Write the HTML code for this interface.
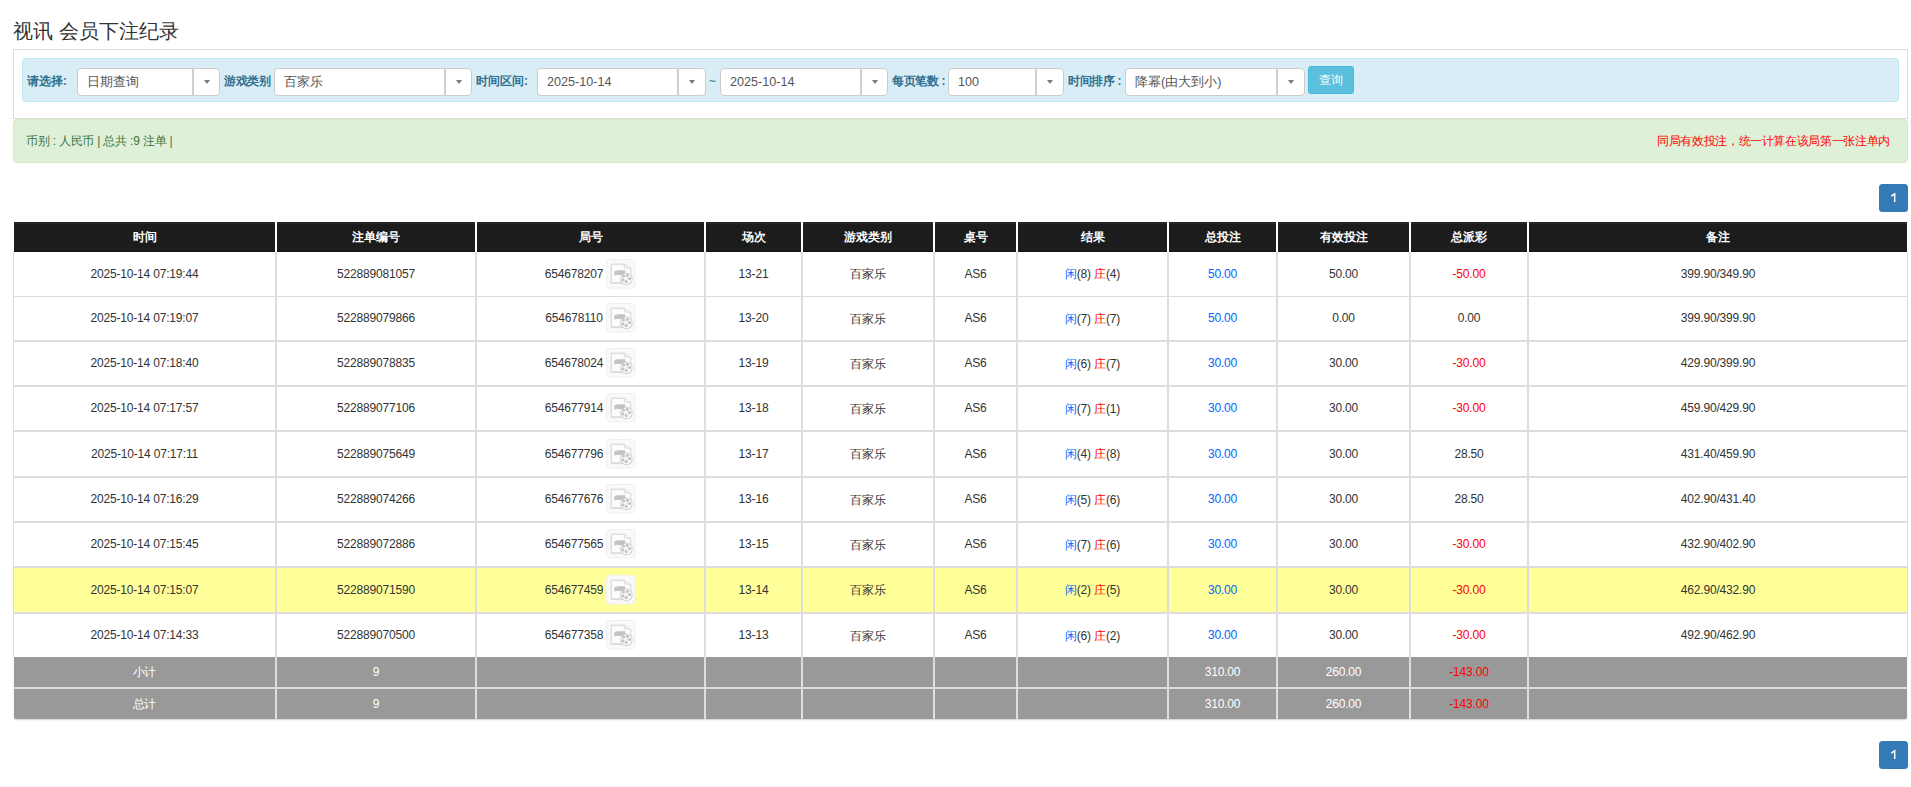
<!DOCTYPE html>
<html><head><meta charset="utf-8"><title>视讯 会员下注纪录</title>
<style>
*{box-sizing:border-box;margin:0;padding:0}
html,body{width:1911px;height:787px;overflow:hidden;background:#fff}
body{font-family:"Liberation Sans",sans-serif;font-size:12px;color:#333;position:relative}
.abs{position:absolute}
h3.title{position:absolute;left:13px;top:17px;font-size:20px;font-weight:normal;color:#333;line-height:28px;white-space:nowrap}
.panel{position:absolute;left:13px;top:49px;width:1895px;height:70px;border:1px solid #ddd;background:#fff}
.ainfo{position:absolute;left:22px;top:58px;width:1877px;height:44px;background:#d9edf7;border:1px solid #bce8f1;border-radius:4px}
.lbl{position:absolute;top:74px;font-weight:bold;color:#31708f;font-size:12px;line-height:14px;white-space:nowrap}
.sel{position:absolute;background:#fff;border:1px solid #ccc;border-radius:4px}
.st{position:absolute;left:9px;top:5px;font-size:12.6px;line-height:16px;color:#555;white-space:nowrap}
.sdiv{position:absolute;top:0;bottom:0;width:2px;background:#d0d0d0}
.sc{position:absolute;top:0;bottom:0;display:flex;align-items:center;justify-content:center}
.caret{display:block;width:0;height:0;border-top:4px solid #7a7a7a;border-left:3px solid transparent;border-right:3px solid transparent}
.btn{position:absolute;left:1308px;top:66px;width:46px;height:28px;background:#5bc0de;border:1px solid #46b8da;border-radius:3px;color:#fff;font-size:12px;line-height:26px;text-align:center}
.asucc{position:absolute;left:13px;top:119px;width:1895px;height:44px;background:#dff0d8;border:1px solid #d6e9c6;border-radius:4px;color:#3c763d}
.pg{position:absolute;width:29px;height:28px;background:#337ab7;border-radius:3.5px;color:#fff;font-weight:normal;font-size:12px;line-height:28px;text-align:center}
.hd{position:absolute;top:222px;height:30px;background:#1c1c1c;box-shadow:inset 0 1px 0 #212121,inset 0 2px 0 #292929,inset 0 -1px 0 #131313;color:#fff;font-weight:bold;font-size:12px;display:flex;align-items:center;justify-content:center}
.c{position:absolute;font-size:12px;letter-spacing:-0.18px;padding-bottom:1px;display:flex;align-items:center;justify-content:center;white-space:nowrap}
.vl{position:absolute;width:2px;background:#ddd}
.hl{position:absolute;background:#ddd}
.ft{position:absolute;background:#999;color:#fff;font-size:12px;letter-spacing:-0.18px;display:flex;align-items:center;justify-content:center}
.blue{color:#0066ff}.red{color:#ff0000}
.film{display:inline-block;width:30px;height:30px;margin-left:3px;vertical-align:middle}
.film svg{display:block}
</style></head><body>

<h3 class="title">视讯 会员下注纪录</h3>
<div class="panel"></div><div class="ainfo"></div>
<span class="lbl" style="left:27px">请选择:</span>
<div class="sel" style="left:77px;top:68px;width:143px;height:28px"><span class="st">日期查询</span><div class="sdiv" style="left:114px"></div><div class="sc" style="left:116px;right:0"><i class="caret"></i></div></div>
<span class="lbl" style="left:224px;letter-spacing:-0.4px">游戏类别</span>
<div class="sel" style="left:274px;top:68px;width:198px;height:28px"><span class="st">百家乐</span><div class="sdiv" style="left:169px"></div><div class="sc" style="left:171px;right:0"><i class="caret"></i></div></div>
<span class="lbl" style="left:476px">时间区间:</span>
<div class="sel" style="left:537px;top:68px;width:169px;height:28px"><span class="st">2025-10-14</span><div class="sdiv" style="left:139px"></div><div class="sc" style="left:141px;right:0"><i class="caret"></i></div></div>
<span class="abs" style="left:709px;top:74px;color:#31708f;font-size:12px;line-height:14px">~</span>
<div class="sel" style="left:720px;top:68px;width:168px;height:28px"><span class="st">2025-10-14</span><div class="sdiv" style="left:139px"></div><div class="sc" style="left:141px;right:0"><i class="caret"></i></div></div>
<span class="lbl" style="left:892px;letter-spacing:-0.35px">每页笔数 :</span>
<div class="sel" style="left:948px;top:68px;width:116px;height:28px"><span class="st">100</span><div class="sdiv" style="left:86px"></div><div class="sc" style="left:88px;right:0"><i class="caret"></i></div></div>
<span class="lbl" style="left:1068px;letter-spacing:-0.35px">时间排序 :</span>
<div class="sel" style="left:1125px;top:68px;width:180px;height:28px"><span class="st">降幂(由大到小)</span><div class="sdiv" style="left:150px"></div><div class="sc" style="left:152px;right:0"><i class="caret"></i></div></div>
<div class="btn">查询</div>
<div class="asucc"><span class="abs" style="left:12px;top:14px;line-height:14px;letter-spacing:-0.22px">币别 : 人民币 | 总共 :9 注单 |</span><span class="abs red" style="right:17px;top:14px;line-height:14px;letter-spacing:-0.35px">同局有效投注，统一计算在该局第一张注单内</span></div>
<div class="pg" style="left:1879px;top:184px"><svg width="29" height="28" style="display:block"><path d="M12.3 12L15.7 9.9V18" fill="none" stroke="#fff" stroke-width="1.5"/></svg></div>
<div class="hd" style="left:14px;width:261px">时间</div>
<div class="hd" style="left:277px;width:198px">注单编号</div>
<div class="hd" style="left:477px;width:227px">局号</div>
<div class="hd" style="left:706px;width:95px">场次</div>
<div class="hd" style="left:803px;width:130px">游戏类别</div>
<div class="hd" style="left:935px;width:81px">桌号</div>
<div class="hd" style="left:1018px;width:149px">结果</div>
<div class="hd" style="left:1169px;width:107px">总投注</div>
<div class="hd" style="left:1278px;width:131px">有效投注</div>
<div class="hd" style="left:1411px;width:116px">总派彩</div>
<div class="hd" style="left:1529px;width:378px">备注</div>
<div class="abs" style="left:13px;top:252px;width:1895px;height:44px;background:#fff"></div>
<div class="c" style="left:14px;top:252px;width:261px;height:44px"><span>2025-10-14 07:19:44</span></div>
<div class="c" style="left:277px;top:252px;width:198px;height:44px"><span>522889081057</span></div>
<div class="c" style="left:477px;top:252px;width:227px;height:44px"><span><span style="position:relative;top:1px">654678207</span><span class="film"><svg width="30" height="30" viewBox="0 0 30 30"><rect x="0.5" y="0.5" width="28.5" height="28.5" rx="3.5" fill="#f9f9f9" stroke="#efefef"/><path d="M5.2 5.2H18.3l6.5 4.3V24.3H5.2z" fill="#fcfcfc" stroke="#cdcdcd" stroke-width="0.9"/><path d="M5.6 23.6H24.4" stroke="#e0e0e0" stroke-width="1.3"/><path d="M18.3 5.2V8.7L24.8 9.5" fill="#f4f4f4" stroke="#d2d2d2" stroke-width="0.8"/><path d="M8.4 11.8L10.5 12.6V11.2H19.2V16.1H10.5V15.2L8.4 17z" fill="#c2c2c2"/><circle cx="20.4" cy="20" r="5.8" fill="#fbfbfb" stroke="#c9c9c9" stroke-width="0.9"/><circle cx="17.65" cy="17" r="1.6" fill="#c4c4c4"/><circle cx="21.3" cy="16.4" r="1.6" fill="#c4c4c4"/><circle cx="23.5" cy="19.6" r="1.6" fill="#c4c4c4"/><circle cx="20.25" cy="22.6" r="1.6" fill="#c4c4c4"/><circle cx="17" cy="20.9" r="1.6" fill="#c4c4c4"/><path d="M19.8 19.9h1.2" stroke="#cfcfcf" stroke-width="0.6"/></svg></span></span></div>
<div class="c" style="left:706px;top:252px;width:95px;height:44px"><span>13-21</span></div>
<div class="c" style="left:803px;top:252px;width:130px;height:44px"><span><span style="position:relative;top:1px">百家乐</span></span></div>
<div class="c" style="left:935px;top:252px;width:81px;height:44px"><span>AS6</span></div>
<div class="c" style="left:1018px;top:252px;width:149px;height:44px"><span><span style="position:relative;top:1px"><span class="blue">闲</span>(8) <span class="red">庄</span>(4)</span></span></div>
<div class="c" style="left:1169px;top:252px;width:107px;height:44px"><span><span class="blue">50.00</span></span></div>
<div class="c" style="left:1278px;top:252px;width:131px;height:44px"><span>50.00</span></div>
<div class="c" style="left:1411px;top:252px;width:116px;height:44px"><span><span class="red">-50.00</span></span></div>
<div class="c" style="left:1529px;top:252px;width:378px;height:44px"><span>399.90/349.90</span></div>
<div class="abs" style="left:13px;top:297px;width:1895px;height:43px;background:#fff"></div>
<div class="c" style="left:14px;top:297px;width:261px;height:43px"><span>2025-10-14 07:19:07</span></div>
<div class="c" style="left:277px;top:297px;width:198px;height:43px"><span>522889079866</span></div>
<div class="c" style="left:477px;top:297px;width:227px;height:43px"><span><span style="position:relative;top:1px">654678110</span><span class="film"><svg width="30" height="30" viewBox="0 0 30 30"><rect x="0.5" y="0.5" width="28.5" height="28.5" rx="3.5" fill="#f9f9f9" stroke="#efefef"/><path d="M5.2 5.2H18.3l6.5 4.3V24.3H5.2z" fill="#fcfcfc" stroke="#cdcdcd" stroke-width="0.9"/><path d="M5.6 23.6H24.4" stroke="#e0e0e0" stroke-width="1.3"/><path d="M18.3 5.2V8.7L24.8 9.5" fill="#f4f4f4" stroke="#d2d2d2" stroke-width="0.8"/><path d="M8.4 11.8L10.5 12.6V11.2H19.2V16.1H10.5V15.2L8.4 17z" fill="#c2c2c2"/><circle cx="20.4" cy="20" r="5.8" fill="#fbfbfb" stroke="#c9c9c9" stroke-width="0.9"/><circle cx="17.65" cy="17" r="1.6" fill="#c4c4c4"/><circle cx="21.3" cy="16.4" r="1.6" fill="#c4c4c4"/><circle cx="23.5" cy="19.6" r="1.6" fill="#c4c4c4"/><circle cx="20.25" cy="22.6" r="1.6" fill="#c4c4c4"/><circle cx="17" cy="20.9" r="1.6" fill="#c4c4c4"/><path d="M19.8 19.9h1.2" stroke="#cfcfcf" stroke-width="0.6"/></svg></span></span></div>
<div class="c" style="left:706px;top:297px;width:95px;height:43px"><span>13-20</span></div>
<div class="c" style="left:803px;top:297px;width:130px;height:43px"><span><span style="position:relative;top:1px">百家乐</span></span></div>
<div class="c" style="left:935px;top:297px;width:81px;height:43px"><span>AS6</span></div>
<div class="c" style="left:1018px;top:297px;width:149px;height:43px"><span><span style="position:relative;top:1px"><span class="blue">闲</span>(7) <span class="red">庄</span>(7)</span></span></div>
<div class="c" style="left:1169px;top:297px;width:107px;height:43px"><span><span class="blue">50.00</span></span></div>
<div class="c" style="left:1278px;top:297px;width:131px;height:43px"><span>0.00</span></div>
<div class="c" style="left:1411px;top:297px;width:116px;height:43px"><span>0.00</span></div>
<div class="c" style="left:1529px;top:297px;width:378px;height:43px"><span>399.90/399.90</span></div>
<div class="abs" style="left:13px;top:342px;width:1895px;height:43px;background:#fff"></div>
<div class="c" style="left:14px;top:342px;width:261px;height:43px"><span>2025-10-14 07:18:40</span></div>
<div class="c" style="left:277px;top:342px;width:198px;height:43px"><span>522889078835</span></div>
<div class="c" style="left:477px;top:342px;width:227px;height:43px"><span><span style="position:relative;top:1px">654678024</span><span class="film"><svg width="30" height="30" viewBox="0 0 30 30"><rect x="0.5" y="0.5" width="28.5" height="28.5" rx="3.5" fill="#f9f9f9" stroke="#efefef"/><path d="M5.2 5.2H18.3l6.5 4.3V24.3H5.2z" fill="#fcfcfc" stroke="#cdcdcd" stroke-width="0.9"/><path d="M5.6 23.6H24.4" stroke="#e0e0e0" stroke-width="1.3"/><path d="M18.3 5.2V8.7L24.8 9.5" fill="#f4f4f4" stroke="#d2d2d2" stroke-width="0.8"/><path d="M8.4 11.8L10.5 12.6V11.2H19.2V16.1H10.5V15.2L8.4 17z" fill="#c2c2c2"/><circle cx="20.4" cy="20" r="5.8" fill="#fbfbfb" stroke="#c9c9c9" stroke-width="0.9"/><circle cx="17.65" cy="17" r="1.6" fill="#c4c4c4"/><circle cx="21.3" cy="16.4" r="1.6" fill="#c4c4c4"/><circle cx="23.5" cy="19.6" r="1.6" fill="#c4c4c4"/><circle cx="20.25" cy="22.6" r="1.6" fill="#c4c4c4"/><circle cx="17" cy="20.9" r="1.6" fill="#c4c4c4"/><path d="M19.8 19.9h1.2" stroke="#cfcfcf" stroke-width="0.6"/></svg></span></span></div>
<div class="c" style="left:706px;top:342px;width:95px;height:43px"><span>13-19</span></div>
<div class="c" style="left:803px;top:342px;width:130px;height:43px"><span><span style="position:relative;top:1px">百家乐</span></span></div>
<div class="c" style="left:935px;top:342px;width:81px;height:43px"><span>AS6</span></div>
<div class="c" style="left:1018px;top:342px;width:149px;height:43px"><span><span style="position:relative;top:1px"><span class="blue">闲</span>(6) <span class="red">庄</span>(7)</span></span></div>
<div class="c" style="left:1169px;top:342px;width:107px;height:43px"><span><span class="blue">30.00</span></span></div>
<div class="c" style="left:1278px;top:342px;width:131px;height:43px"><span>30.00</span></div>
<div class="c" style="left:1411px;top:342px;width:116px;height:43px"><span><span class="red">-30.00</span></span></div>
<div class="c" style="left:1529px;top:342px;width:378px;height:43px"><span>429.90/399.90</span></div>
<div class="abs" style="left:13px;top:387px;width:1895px;height:43px;background:#fff"></div>
<div class="c" style="left:14px;top:387px;width:261px;height:43px"><span>2025-10-14 07:17:57</span></div>
<div class="c" style="left:277px;top:387px;width:198px;height:43px"><span>522889077106</span></div>
<div class="c" style="left:477px;top:387px;width:227px;height:43px"><span><span style="position:relative;top:1px">654677914</span><span class="film"><svg width="30" height="30" viewBox="0 0 30 30"><rect x="0.5" y="0.5" width="28.5" height="28.5" rx="3.5" fill="#f9f9f9" stroke="#efefef"/><path d="M5.2 5.2H18.3l6.5 4.3V24.3H5.2z" fill="#fcfcfc" stroke="#cdcdcd" stroke-width="0.9"/><path d="M5.6 23.6H24.4" stroke="#e0e0e0" stroke-width="1.3"/><path d="M18.3 5.2V8.7L24.8 9.5" fill="#f4f4f4" stroke="#d2d2d2" stroke-width="0.8"/><path d="M8.4 11.8L10.5 12.6V11.2H19.2V16.1H10.5V15.2L8.4 17z" fill="#c2c2c2"/><circle cx="20.4" cy="20" r="5.8" fill="#fbfbfb" stroke="#c9c9c9" stroke-width="0.9"/><circle cx="17.65" cy="17" r="1.6" fill="#c4c4c4"/><circle cx="21.3" cy="16.4" r="1.6" fill="#c4c4c4"/><circle cx="23.5" cy="19.6" r="1.6" fill="#c4c4c4"/><circle cx="20.25" cy="22.6" r="1.6" fill="#c4c4c4"/><circle cx="17" cy="20.9" r="1.6" fill="#c4c4c4"/><path d="M19.8 19.9h1.2" stroke="#cfcfcf" stroke-width="0.6"/></svg></span></span></div>
<div class="c" style="left:706px;top:387px;width:95px;height:43px"><span>13-18</span></div>
<div class="c" style="left:803px;top:387px;width:130px;height:43px"><span><span style="position:relative;top:1px">百家乐</span></span></div>
<div class="c" style="left:935px;top:387px;width:81px;height:43px"><span>AS6</span></div>
<div class="c" style="left:1018px;top:387px;width:149px;height:43px"><span><span style="position:relative;top:1px"><span class="blue">闲</span>(7) <span class="red">庄</span>(1)</span></span></div>
<div class="c" style="left:1169px;top:387px;width:107px;height:43px"><span><span class="blue">30.00</span></span></div>
<div class="c" style="left:1278px;top:387px;width:131px;height:43px"><span>30.00</span></div>
<div class="c" style="left:1411px;top:387px;width:116px;height:43px"><span><span class="red">-30.00</span></span></div>
<div class="c" style="left:1529px;top:387px;width:378px;height:43px"><span>459.90/429.90</span></div>
<div class="abs" style="left:13px;top:432px;width:1895px;height:44px;background:#fff"></div>
<div class="c" style="left:14px;top:432px;width:261px;height:44px"><span>2025-10-14 07:17:11</span></div>
<div class="c" style="left:277px;top:432px;width:198px;height:44px"><span>522889075649</span></div>
<div class="c" style="left:477px;top:432px;width:227px;height:44px"><span><span style="position:relative;top:1px">654677796</span><span class="film"><svg width="30" height="30" viewBox="0 0 30 30"><rect x="0.5" y="0.5" width="28.5" height="28.5" rx="3.5" fill="#f9f9f9" stroke="#efefef"/><path d="M5.2 5.2H18.3l6.5 4.3V24.3H5.2z" fill="#fcfcfc" stroke="#cdcdcd" stroke-width="0.9"/><path d="M5.6 23.6H24.4" stroke="#e0e0e0" stroke-width="1.3"/><path d="M18.3 5.2V8.7L24.8 9.5" fill="#f4f4f4" stroke="#d2d2d2" stroke-width="0.8"/><path d="M8.4 11.8L10.5 12.6V11.2H19.2V16.1H10.5V15.2L8.4 17z" fill="#c2c2c2"/><circle cx="20.4" cy="20" r="5.8" fill="#fbfbfb" stroke="#c9c9c9" stroke-width="0.9"/><circle cx="17.65" cy="17" r="1.6" fill="#c4c4c4"/><circle cx="21.3" cy="16.4" r="1.6" fill="#c4c4c4"/><circle cx="23.5" cy="19.6" r="1.6" fill="#c4c4c4"/><circle cx="20.25" cy="22.6" r="1.6" fill="#c4c4c4"/><circle cx="17" cy="20.9" r="1.6" fill="#c4c4c4"/><path d="M19.8 19.9h1.2" stroke="#cfcfcf" stroke-width="0.6"/></svg></span></span></div>
<div class="c" style="left:706px;top:432px;width:95px;height:44px"><span>13-17</span></div>
<div class="c" style="left:803px;top:432px;width:130px;height:44px"><span><span style="position:relative;top:1px">百家乐</span></span></div>
<div class="c" style="left:935px;top:432px;width:81px;height:44px"><span>AS6</span></div>
<div class="c" style="left:1018px;top:432px;width:149px;height:44px"><span><span style="position:relative;top:1px"><span class="blue">闲</span>(4) <span class="red">庄</span>(8)</span></span></div>
<div class="c" style="left:1169px;top:432px;width:107px;height:44px"><span><span class="blue">30.00</span></span></div>
<div class="c" style="left:1278px;top:432px;width:131px;height:44px"><span>30.00</span></div>
<div class="c" style="left:1411px;top:432px;width:116px;height:44px"><span>28.50</span></div>
<div class="c" style="left:1529px;top:432px;width:378px;height:44px"><span>431.40/459.90</span></div>
<div class="abs" style="left:13px;top:478px;width:1895px;height:43px;background:#fff"></div>
<div class="c" style="left:14px;top:478px;width:261px;height:43px"><span>2025-10-14 07:16:29</span></div>
<div class="c" style="left:277px;top:478px;width:198px;height:43px"><span>522889074266</span></div>
<div class="c" style="left:477px;top:478px;width:227px;height:43px"><span><span style="position:relative;top:1px">654677676</span><span class="film"><svg width="30" height="30" viewBox="0 0 30 30"><rect x="0.5" y="0.5" width="28.5" height="28.5" rx="3.5" fill="#f9f9f9" stroke="#efefef"/><path d="M5.2 5.2H18.3l6.5 4.3V24.3H5.2z" fill="#fcfcfc" stroke="#cdcdcd" stroke-width="0.9"/><path d="M5.6 23.6H24.4" stroke="#e0e0e0" stroke-width="1.3"/><path d="M18.3 5.2V8.7L24.8 9.5" fill="#f4f4f4" stroke="#d2d2d2" stroke-width="0.8"/><path d="M8.4 11.8L10.5 12.6V11.2H19.2V16.1H10.5V15.2L8.4 17z" fill="#c2c2c2"/><circle cx="20.4" cy="20" r="5.8" fill="#fbfbfb" stroke="#c9c9c9" stroke-width="0.9"/><circle cx="17.65" cy="17" r="1.6" fill="#c4c4c4"/><circle cx="21.3" cy="16.4" r="1.6" fill="#c4c4c4"/><circle cx="23.5" cy="19.6" r="1.6" fill="#c4c4c4"/><circle cx="20.25" cy="22.6" r="1.6" fill="#c4c4c4"/><circle cx="17" cy="20.9" r="1.6" fill="#c4c4c4"/><path d="M19.8 19.9h1.2" stroke="#cfcfcf" stroke-width="0.6"/></svg></span></span></div>
<div class="c" style="left:706px;top:478px;width:95px;height:43px"><span>13-16</span></div>
<div class="c" style="left:803px;top:478px;width:130px;height:43px"><span><span style="position:relative;top:1px">百家乐</span></span></div>
<div class="c" style="left:935px;top:478px;width:81px;height:43px"><span>AS6</span></div>
<div class="c" style="left:1018px;top:478px;width:149px;height:43px"><span><span style="position:relative;top:1px"><span class="blue">闲</span>(5) <span class="red">庄</span>(6)</span></span></div>
<div class="c" style="left:1169px;top:478px;width:107px;height:43px"><span><span class="blue">30.00</span></span></div>
<div class="c" style="left:1278px;top:478px;width:131px;height:43px"><span>30.00</span></div>
<div class="c" style="left:1411px;top:478px;width:116px;height:43px"><span>28.50</span></div>
<div class="c" style="left:1529px;top:478px;width:378px;height:43px"><span>402.90/431.40</span></div>
<div class="abs" style="left:13px;top:523px;width:1895px;height:43px;background:#fff"></div>
<div class="c" style="left:14px;top:523px;width:261px;height:43px"><span>2025-10-14 07:15:45</span></div>
<div class="c" style="left:277px;top:523px;width:198px;height:43px"><span>522889072886</span></div>
<div class="c" style="left:477px;top:523px;width:227px;height:43px"><span><span style="position:relative;top:1px">654677565</span><span class="film"><svg width="30" height="30" viewBox="0 0 30 30"><rect x="0.5" y="0.5" width="28.5" height="28.5" rx="3.5" fill="#f9f9f9" stroke="#efefef"/><path d="M5.2 5.2H18.3l6.5 4.3V24.3H5.2z" fill="#fcfcfc" stroke="#cdcdcd" stroke-width="0.9"/><path d="M5.6 23.6H24.4" stroke="#e0e0e0" stroke-width="1.3"/><path d="M18.3 5.2V8.7L24.8 9.5" fill="#f4f4f4" stroke="#d2d2d2" stroke-width="0.8"/><path d="M8.4 11.8L10.5 12.6V11.2H19.2V16.1H10.5V15.2L8.4 17z" fill="#c2c2c2"/><circle cx="20.4" cy="20" r="5.8" fill="#fbfbfb" stroke="#c9c9c9" stroke-width="0.9"/><circle cx="17.65" cy="17" r="1.6" fill="#c4c4c4"/><circle cx="21.3" cy="16.4" r="1.6" fill="#c4c4c4"/><circle cx="23.5" cy="19.6" r="1.6" fill="#c4c4c4"/><circle cx="20.25" cy="22.6" r="1.6" fill="#c4c4c4"/><circle cx="17" cy="20.9" r="1.6" fill="#c4c4c4"/><path d="M19.8 19.9h1.2" stroke="#cfcfcf" stroke-width="0.6"/></svg></span></span></div>
<div class="c" style="left:706px;top:523px;width:95px;height:43px"><span>13-15</span></div>
<div class="c" style="left:803px;top:523px;width:130px;height:43px"><span><span style="position:relative;top:1px">百家乐</span></span></div>
<div class="c" style="left:935px;top:523px;width:81px;height:43px"><span>AS6</span></div>
<div class="c" style="left:1018px;top:523px;width:149px;height:43px"><span><span style="position:relative;top:1px"><span class="blue">闲</span>(7) <span class="red">庄</span>(6)</span></span></div>
<div class="c" style="left:1169px;top:523px;width:107px;height:43px"><span><span class="blue">30.00</span></span></div>
<div class="c" style="left:1278px;top:523px;width:131px;height:43px"><span>30.00</span></div>
<div class="c" style="left:1411px;top:523px;width:116px;height:43px"><span><span class="red">-30.00</span></span></div>
<div class="c" style="left:1529px;top:523px;width:378px;height:43px"><span>432.90/402.90</span></div>
<div class="abs" style="left:13px;top:568px;width:1895px;height:44px;background:#ffff99"></div>
<div class="c" style="left:14px;top:568px;width:261px;height:44px"><span>2025-10-14 07:15:07</span></div>
<div class="c" style="left:277px;top:568px;width:198px;height:44px"><span>522889071590</span></div>
<div class="c" style="left:477px;top:568px;width:227px;height:44px"><span><span style="position:relative;top:1px">654677459</span><span class="film"><svg width="30" height="30" viewBox="0 0 30 30"><rect x="0.5" y="0.5" width="28.5" height="28.5" rx="3.5" fill="#f9f9f9" stroke="#efefef"/><path d="M5.2 5.2H18.3l6.5 4.3V24.3H5.2z" fill="#fcfcfc" stroke="#cdcdcd" stroke-width="0.9"/><path d="M5.6 23.6H24.4" stroke="#e0e0e0" stroke-width="1.3"/><path d="M18.3 5.2V8.7L24.8 9.5" fill="#f4f4f4" stroke="#d2d2d2" stroke-width="0.8"/><path d="M8.4 11.8L10.5 12.6V11.2H19.2V16.1H10.5V15.2L8.4 17z" fill="#c2c2c2"/><circle cx="20.4" cy="20" r="5.8" fill="#fbfbfb" stroke="#c9c9c9" stroke-width="0.9"/><circle cx="17.65" cy="17" r="1.6" fill="#c4c4c4"/><circle cx="21.3" cy="16.4" r="1.6" fill="#c4c4c4"/><circle cx="23.5" cy="19.6" r="1.6" fill="#c4c4c4"/><circle cx="20.25" cy="22.6" r="1.6" fill="#c4c4c4"/><circle cx="17" cy="20.9" r="1.6" fill="#c4c4c4"/><path d="M19.8 19.9h1.2" stroke="#cfcfcf" stroke-width="0.6"/></svg></span></span></div>
<div class="c" style="left:706px;top:568px;width:95px;height:44px"><span>13-14</span></div>
<div class="c" style="left:803px;top:568px;width:130px;height:44px"><span><span style="position:relative;top:1px">百家乐</span></span></div>
<div class="c" style="left:935px;top:568px;width:81px;height:44px"><span>AS6</span></div>
<div class="c" style="left:1018px;top:568px;width:149px;height:44px"><span><span style="position:relative;top:1px"><span class="blue">闲</span>(2) <span class="red">庄</span>(5)</span></span></div>
<div class="c" style="left:1169px;top:568px;width:107px;height:44px"><span><span class="blue">30.00</span></span></div>
<div class="c" style="left:1278px;top:568px;width:131px;height:44px"><span>30.00</span></div>
<div class="c" style="left:1411px;top:568px;width:116px;height:44px"><span><span class="red">-30.00</span></span></div>
<div class="c" style="left:1529px;top:568px;width:378px;height:44px"><span>462.90/432.90</span></div>
<div class="abs" style="left:13px;top:614px;width:1895px;height:43px;background:#fff"></div>
<div class="c" style="left:14px;top:614px;width:261px;height:43px"><span>2025-10-14 07:14:33</span></div>
<div class="c" style="left:277px;top:614px;width:198px;height:43px"><span>522889070500</span></div>
<div class="c" style="left:477px;top:614px;width:227px;height:43px"><span><span style="position:relative;top:1px">654677358</span><span class="film"><svg width="30" height="30" viewBox="0 0 30 30"><rect x="0.5" y="0.5" width="28.5" height="28.5" rx="3.5" fill="#f9f9f9" stroke="#efefef"/><path d="M5.2 5.2H18.3l6.5 4.3V24.3H5.2z" fill="#fcfcfc" stroke="#cdcdcd" stroke-width="0.9"/><path d="M5.6 23.6H24.4" stroke="#e0e0e0" stroke-width="1.3"/><path d="M18.3 5.2V8.7L24.8 9.5" fill="#f4f4f4" stroke="#d2d2d2" stroke-width="0.8"/><path d="M8.4 11.8L10.5 12.6V11.2H19.2V16.1H10.5V15.2L8.4 17z" fill="#c2c2c2"/><circle cx="20.4" cy="20" r="5.8" fill="#fbfbfb" stroke="#c9c9c9" stroke-width="0.9"/><circle cx="17.65" cy="17" r="1.6" fill="#c4c4c4"/><circle cx="21.3" cy="16.4" r="1.6" fill="#c4c4c4"/><circle cx="23.5" cy="19.6" r="1.6" fill="#c4c4c4"/><circle cx="20.25" cy="22.6" r="1.6" fill="#c4c4c4"/><circle cx="17" cy="20.9" r="1.6" fill="#c4c4c4"/><path d="M19.8 19.9h1.2" stroke="#cfcfcf" stroke-width="0.6"/></svg></span></span></div>
<div class="c" style="left:706px;top:614px;width:95px;height:43px"><span>13-13</span></div>
<div class="c" style="left:803px;top:614px;width:130px;height:43px"><span><span style="position:relative;top:1px">百家乐</span></span></div>
<div class="c" style="left:935px;top:614px;width:81px;height:43px"><span>AS6</span></div>
<div class="c" style="left:1018px;top:614px;width:149px;height:43px"><span><span style="position:relative;top:1px"><span class="blue">闲</span>(6) <span class="red">庄</span>(2)</span></span></div>
<div class="c" style="left:1169px;top:614px;width:107px;height:43px"><span><span class="blue">30.00</span></span></div>
<div class="c" style="left:1278px;top:614px;width:131px;height:43px"><span>30.00</span></div>
<div class="c" style="left:1411px;top:614px;width:116px;height:43px"><span><span class="red">-30.00</span></span></div>
<div class="c" style="left:1529px;top:614px;width:378px;height:43px"><span>492.90/462.90</span></div>
<div class="hl" style="left:13px;top:296px;width:1895px;height:1px"></div>
<div class="hl" style="left:13px;top:340px;width:1895px;height:2px"></div>
<div class="hl" style="left:13px;top:385px;width:1895px;height:2px"></div>
<div class="hl" style="left:13px;top:430px;width:1895px;height:2px"></div>
<div class="hl" style="left:13px;top:476px;width:1895px;height:2px"></div>
<div class="hl" style="left:13px;top:521px;width:1895px;height:2px"></div>
<div class="hl" style="left:13px;top:566px;width:1895px;height:2px"></div>
<div class="hl" style="left:13px;top:612px;width:1895px;height:2px"></div>
<div class="hl" style="left:13px;top:657px;width:1895px;height:0px"></div>
<div class="vl" style="left:13px;top:252px;height:405px;width:1px"></div>
<div class="vl" style="left:275px;top:252px;height:405px"></div>
<div class="vl" style="left:475px;top:252px;height:405px"></div>
<div class="vl" style="left:704px;top:252px;height:405px"></div>
<div class="vl" style="left:801px;top:252px;height:405px"></div>
<div class="vl" style="left:933px;top:252px;height:405px"></div>
<div class="vl" style="left:1016px;top:252px;height:405px"></div>
<div class="vl" style="left:1167px;top:252px;height:405px"></div>
<div class="vl" style="left:1276px;top:252px;height:405px"></div>
<div class="vl" style="left:1409px;top:252px;height:405px"></div>
<div class="vl" style="left:1527px;top:252px;height:405px"></div>
<div class="vl" style="left:1907px;top:252px;height:405px;width:1px"></div>
<div class="abs" style="left:14px;top:657px;width:1893px;height:62px;background:#ddd;border-radius:0 0 2px 2px;box-shadow:0 1px 1.5px rgba(0,0,0,0.18)"></div>
<div class="ft" style="left:14px;top:657px;width:261px;height:30px;">小计</div>
<div class="ft" style="left:277px;top:657px;width:198px;height:30px;">9</div>
<div class="ft" style="left:477px;top:657px;width:227px;height:30px;"></div>
<div class="ft" style="left:706px;top:657px;width:95px;height:30px;"></div>
<div class="ft" style="left:803px;top:657px;width:130px;height:30px;"></div>
<div class="ft" style="left:935px;top:657px;width:81px;height:30px;"></div>
<div class="ft" style="left:1018px;top:657px;width:149px;height:30px;"></div>
<div class="ft" style="left:1169px;top:657px;width:107px;height:30px;">310.00</div>
<div class="ft" style="left:1278px;top:657px;width:131px;height:30px;">260.00</div>
<div class="ft" style="left:1411px;top:657px;width:116px;height:30px;"><span class="red">-143.00</span></div>
<div class="ft" style="left:1529px;top:657px;width:378px;height:30px;"></div>
<div class="ft" style="left:14px;top:689px;width:261px;height:30px;border-bottom-left-radius:2px;">总计</div>
<div class="ft" style="left:277px;top:689px;width:198px;height:30px;">9</div>
<div class="ft" style="left:477px;top:689px;width:227px;height:30px;"></div>
<div class="ft" style="left:706px;top:689px;width:95px;height:30px;"></div>
<div class="ft" style="left:803px;top:689px;width:130px;height:30px;"></div>
<div class="ft" style="left:935px;top:689px;width:81px;height:30px;"></div>
<div class="ft" style="left:1018px;top:689px;width:149px;height:30px;"></div>
<div class="ft" style="left:1169px;top:689px;width:107px;height:30px;">310.00</div>
<div class="ft" style="left:1278px;top:689px;width:131px;height:30px;">260.00</div>
<div class="ft" style="left:1411px;top:689px;width:116px;height:30px;"><span class="red">-143.00</span></div>
<div class="ft" style="left:1529px;top:689px;width:378px;height:30px;border-bottom-right-radius:2px;"></div>
<div class="pg" style="left:1879px;top:741px"><svg width="29" height="28" style="display:block"><path d="M12.3 12L15.7 9.9V18" fill="none" stroke="#fff" stroke-width="1.5"/></svg></div>
</body></html>
